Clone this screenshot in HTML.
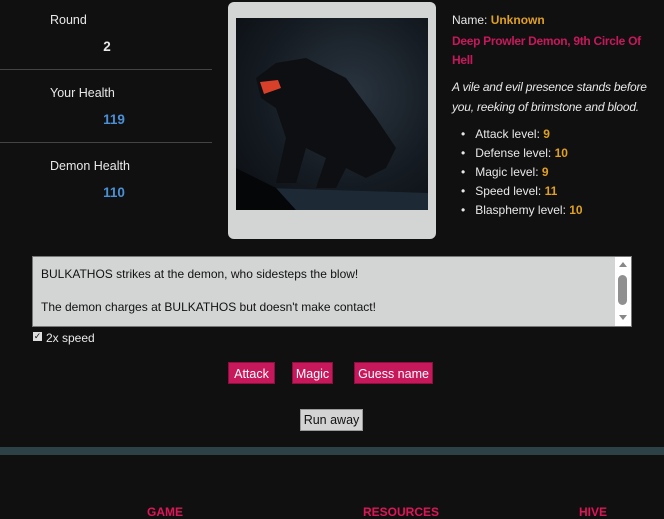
<!DOCTYPE html>
<html><head><meta charset="utf-8"><style>
*{margin:0;padding:0;box-sizing:border-box}
body{width:664px;height:518px;background:#111011;font-family:"Liberation Sans",sans-serif;font-size:12.5px;color:#e8e8e8;position:relative;overflow:hidden}
.a{position:absolute;white-space:nowrap}
.hr{position:absolute;left:0;width:212px;height:1px;background:#444}
.val{font-weight:bold;text-align:center;width:40px;font-size:13.5px}
.blue{color:#4a90d6}
.gold{color:#e0a020;font-weight:bold}
.red{color:#c8185c;font-weight:bold}
.btn{position:absolute;background:#c8185c;color:#fff;height:22px;line-height:22px;text-align:center;font-size:12.5px;border:1px solid #8a1040}
.rt{font-size:12px}
</style></head><body>
<div class="a" style="left:50px;top:13px">Round</div>
<div class="a val" style="left:87px;top:39px">2</div>
<div class="hr" style="top:69px"></div>
<div class="a" style="left:50px;top:86px">Your Health</div>
<div class="a val blue" style="left:94px;top:112px">119</div>
<div class="hr" style="top:142px"></div>
<div class="a" style="left:50px;top:159px">Demon Health</div>
<div class="a val blue" style="left:94px;top:185px">110</div>

<div class="a" style="left:228px;top:2px;width:208px;height:237px;background:#d3d5d4;border-radius:6px"></div>
<div class="a" style="left:236px;top:18px;width:192px;height:192px;background:radial-gradient(ellipse at 60% 40%,#2a3540 0%,#151b22 55%,#0a0d11 100%);overflow:hidden">
<svg width="192" height="192" viewBox="0 0 192 192">
<path d="M30 170 L192 175 L192 192 L50 192Z" fill="#1d2a36"/>
<path d="M0 150 L40 170 L60 192 L0 192Z" fill="#050608"/>
<path d="M20 60 L40 45 L70 40 L110 60 L140 100 L160 130 L150 150 L130 160 L110 150 L100 170 L80 170 L90 140 L70 130 L60 165 L40 165 L50 120 L40 90 L25 80Z" fill="#0d0f12"/>
<path d="M24 64 L42 62 L45 70 L28 76Z" fill="#d8402a"/>
</svg></div>

<div class="a rt" style="left:452px;top:13px">Name: <span class="gold">Unknown</span></div>
<div class="a red rt" style="left:452px;top:32px;line-height:19px;letter-spacing:-0.3px">Deep Prowler Demon, 9th Circle Of<br>Hell</div>
<div class="a rt" style="left:452px;top:77px;font-style:italic;line-height:20px;letter-spacing:-0.2px">A vile and evil presence stands before<br>you, reeking of brimstone and blood.</div>
<div class="a rt" style="left:461px;top:125px;line-height:19px">
<div>•&nbsp;&nbsp;&nbsp;Attack level: <span class="gold">9</span></div>
<div>•&nbsp;&nbsp;&nbsp;Defense level: <span class="gold">10</span></div>
<div>•&nbsp;&nbsp;&nbsp;Magic level: <span class="gold">9</span></div>
<div>•&nbsp;&nbsp;&nbsp;Speed level: <span class="gold">11</span></div>
<div>•&nbsp;&nbsp;&nbsp;Blasphemy level: <span class="gold">10</span></div>
</div>

<div class="a" style="left:32px;top:256px;width:600px;height:71px;background:#d3d5d4;border:1px solid #777;color:#111">
<div class="a" style="left:8px;top:10px;font-size:12px">BULKATHOS strikes at the demon, who sidesteps the blow!</div>
<div class="a" style="left:8px;top:43px;font-size:12px">The demon charges at BULKATHOS but doesn't make contact!</div>
<div class="a" style="right:0;top:0;width:16px;height:69px;background:#fff">
<div class="a" style="left:4px;top:5px;width:0;height:0;border-left:4px solid transparent;border-right:4px solid transparent;border-bottom:5px solid #888"></div>
<div class="a" style="left:3px;top:18px;width:9px;height:30px;background:#909090;border-radius:5px"></div>
<div class="a" style="left:4px;top:58px;width:0;height:0;border-left:4px solid transparent;border-right:4px solid transparent;border-top:5px solid #888"></div>
</div></div>

<div class="a" style="left:33px;top:332px;width:9px;height:9px;background:#ddd;color:#111;font-size:9px;line-height:9px;text-align:center">✓</div>
<div class="a" style="left:46px;top:331px;font-size:12px">2x speed</div>

<div class="btn" style="left:228px;top:362px;width:47px">Attack</div>
<div class="btn" style="left:292px;top:362px;width:41px">Magic</div>
<div class="btn" style="left:354px;top:362px;width:79px">Guess name</div>
<div class="a" style="left:300px;top:409px;width:63px;height:22px;line-height:20px;text-align:center;background:#d3d3d3;color:#111;border:1px solid #999">Run away</div>

<div class="a" style="left:0;top:447px;width:664px;height:8px;background:#2c4246"></div>
<div class="a red" style="left:147px;top:505px;color:#e0145a;font-size:12px">GAME</div>
<div class="a red" style="left:363px;top:505px;color:#e0145a;font-size:12px">RESOURCES</div>
<div class="a red" style="left:579px;top:505px;color:#e0145a;font-size:12px">HIVE</div>
</body></html>
